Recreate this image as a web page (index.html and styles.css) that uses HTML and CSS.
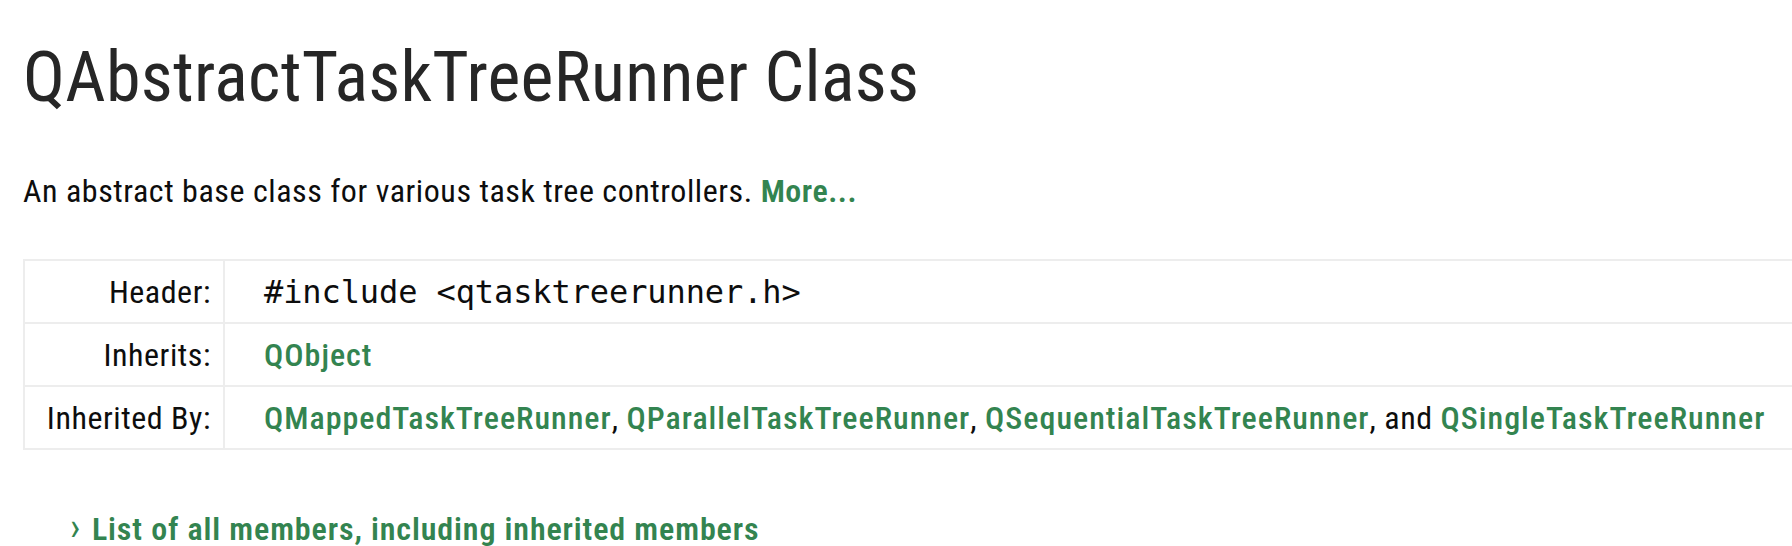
FILE: index.html
```html
<!DOCTYPE html>
<html lang="en">
<head>
<meta charset="utf-8">
<title>QAbstractTaskTreeRunner Class</title>
<link rel="stylesheet" href="styles.css">
</head>
<body>
<main class="page">
  <h1 class="title">QAbstractTaskTreeRunner Class</h1>
  <p class="brief">An abstract base class for various task tree controllers. <a class="link strong" href="#details">More...</a></p>
  <table class="info">
    <tr>
      <td class="label">Header:</td>
      <td class="value"><span class="code">#include &lt;qtasktreerunner.h&gt;</span></td>
    </tr>
    <tr>
      <td class="label">Inherits:</td>
      <td class="value"><a class="link" href="#">QObject</a></td>
    </tr>
    <tr>
      <td class="label">Inherited By:</td>
      <td class="value"><a class="link" href="#">QMappedTaskTreeRunner</a>, <a class="link" href="#">QParallelTaskTreeRunner</a>, <a class="link" href="#">QSequentialTaskTreeRunner</a>, and <a class="link" href="#">QSingleTaskTreeRunner</a></td>
    </tr>
  </table>
  <ul class="more-list">
    <li><a class="link strong members" href="#">List of all members, including inherited members</a></li>
  </ul>
</main>
</body>
</html>
```
FILE: styles.css
```css
html, body {
  margin: 0;
  padding: 0;
  background: #ffffff;
}

body {
  font-family: "Roboto Condensed", "Roboto", sans-serif;
  font-stretch: 75%;
  font-size: 32px;
  letter-spacing: 0.55px;
  line-height: 40px;
  color: #0d0d0d;
}

.page {
  padding: 37px 0 0 23px;
}

.title {
  margin: 0;
  font-size: 70px;
  line-height: 80px;
  font-weight: 400;
  letter-spacing: 0.28px;
  color: #262626;
}

.brief {
  margin: 54px 0 0 0;
}

.link {
  color: #338450;
  text-decoration: none;
  font-weight: 500;
  letter-spacing: 1px;
}

.link.strong {
  font-weight: 600;
  letter-spacing: 0.5px;
}

.link.members {
  letter-spacing: 0.88px;
}

.info {
  margin-top: 48px;
  width: 100%;
  border-collapse: collapse;
}

.info td {
  border: 2px solid #ededed;
  padding: 11px 0 10px 0;
  line-height: 40px;
  vertical-align: top;
  white-space: nowrap;
}

.info td.value {
  border-right: none;
  padding-left: 39px;
}

.info td.label {
  width: 186px;
  padding-right: 12px;
  text-align: right;
}

.code {
  font-family: "DejaVu Sans Mono", monospace;
  font-size: 32px;
  letter-spacing: -0.1px;
  font-stretch: 100%;
}

.more-list {
  list-style: none;
  margin: 57px 0 0 0;
  padding: 0 0 0 47px;
}

.more-list li {
  display: flex;
  align-items: baseline;
}

.more-list li::before {
  content: "›";
  color: #338450;
  font-weight: 400;
  font-size: 38px;
  margin-right: 11px;
}
```
